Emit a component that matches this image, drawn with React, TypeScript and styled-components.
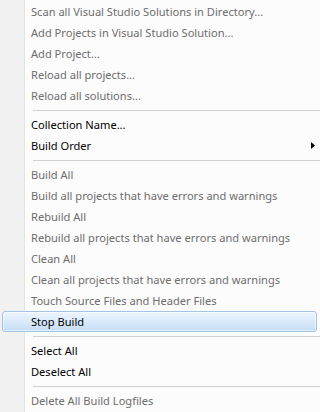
import React from 'react';
import styled, { createGlobalStyle } from 'styled-components';

const GlobalStyle = createGlobalStyle`
  html, body {
    margin: 0;
    padding: 0;
    background: #fcfcfc;
  }
`;

const Menu = styled.div`
  width: 320px;
  height: 412px;
  box-sizing: border-box;
  padding-top: 1px;
  display: flex;
  flex-direction: column;
  overflow: hidden;
  font-family: 'Noto Sans', 'DejaVu Sans', sans-serif;
  font-size: 11.1px;
  /* gutter strip + its double divider line */
  background: linear-gradient(
    to right,
    #f1f1f1 0 24px,
    #e2e3e3 24px 25px,
    #ffffff 25px 26px,
    #fcfcfc 26px
  );
`;

const Item = styled.div<{ $disabled?: boolean; $active?: boolean }>`
  height: 21px;
  box-sizing: border-box;
  margin: 0 3px 0 2px;
  padding: 0 0 0 28px;
  display: flex;
  align-items: center;
  border: 1px solid ${(p) => (p.$active ? '#a4c4e6' : 'transparent')};
  border-radius: 3px;
  color: ${(p) => (p.$disabled ? '#6d6d6d' : '#000000')};
  background: ${(p) =>
    p.$active ? 'linear-gradient(to bottom, #eef5fd 0%, #dcebfb 45%, #c6ddf5 100%)' : 'transparent'};
  box-shadow: ${(p) => (p.$active ? 'inset 0 0 0 1px rgba(255,255,255,0.55)' : 'none')};
  white-space: nowrap;
`;

const Label = styled.span`
  flex: 1;
  line-height: 19px;
`;

const SubArrow = styled.svg`
  width: 5px;
  height: 7px;
  flex-shrink: 0;
`;

const Separator = styled.div`
  height: 1px;
  margin: 4px 0 3px 33px;
  background: #d2d2d2;
`;

type Entry =
  | { kind: 'item'; text: string; disabled?: boolean; active?: boolean; submenu?: boolean }
  | { kind: 'sep' };

const entries: Entry[] = [
  { kind: 'item', text: 'Scan all Visual Studio Solutions in Directory...', disabled: true },
  { kind: 'item', text: 'Add Projects in Visual Studio Solution...', disabled: true },
  { kind: 'item', text: 'Add Project...', disabled: true },
  { kind: 'item', text: 'Reload all projects...', disabled: true },
  { kind: 'item', text: 'Reload all solutions...', disabled: true },
  { kind: 'sep' },
  { kind: 'item', text: 'Collection Name...' },
  { kind: 'item', text: 'Build Order', submenu: true },
  { kind: 'sep' },
  { kind: 'item', text: 'Build All', disabled: true },
  { kind: 'item', text: 'Build all projects that have errors and warnings', disabled: true },
  { kind: 'item', text: 'Rebuild All', disabled: true },
  { kind: 'item', text: 'Rebuild all projects that have errors and warnings', disabled: true },
  { kind: 'item', text: 'Clean All', disabled: true },
  { kind: 'item', text: 'Clean all projects that have errors and warnings', disabled: true },
  { kind: 'item', text: 'Touch Source Files and Header Files', disabled: true },
  { kind: 'item', text: 'Stop Build', active: true },
  { kind: 'sep' },
  { kind: 'item', text: 'Select All' },
  { kind: 'item', text: 'Deselect All' },
  { kind: 'sep' },
  { kind: 'item', text: 'Delete All Build Logfiles', disabled: true },
];

const App: React.FC = () => {
  return (
    <>
      <GlobalStyle />
      <Menu>
        {entries.map((entry, index) =>
          entry.kind === 'sep' ? (
            <Separator key={index} />
          ) : (
            <Item key={index} $disabled={entry.disabled} $active={entry.active}>
              <Label>{entry.text}</Label>
              {entry.submenu && (
                <SubArrow viewBox="0 0 5 7">
                  <polygon points="0,0 4,3.5 0,7" fill="#000" />
                </SubArrow>
              )}
            </Item>
          )
        )}
      </Menu>
    </>
  );
};

export default App;
